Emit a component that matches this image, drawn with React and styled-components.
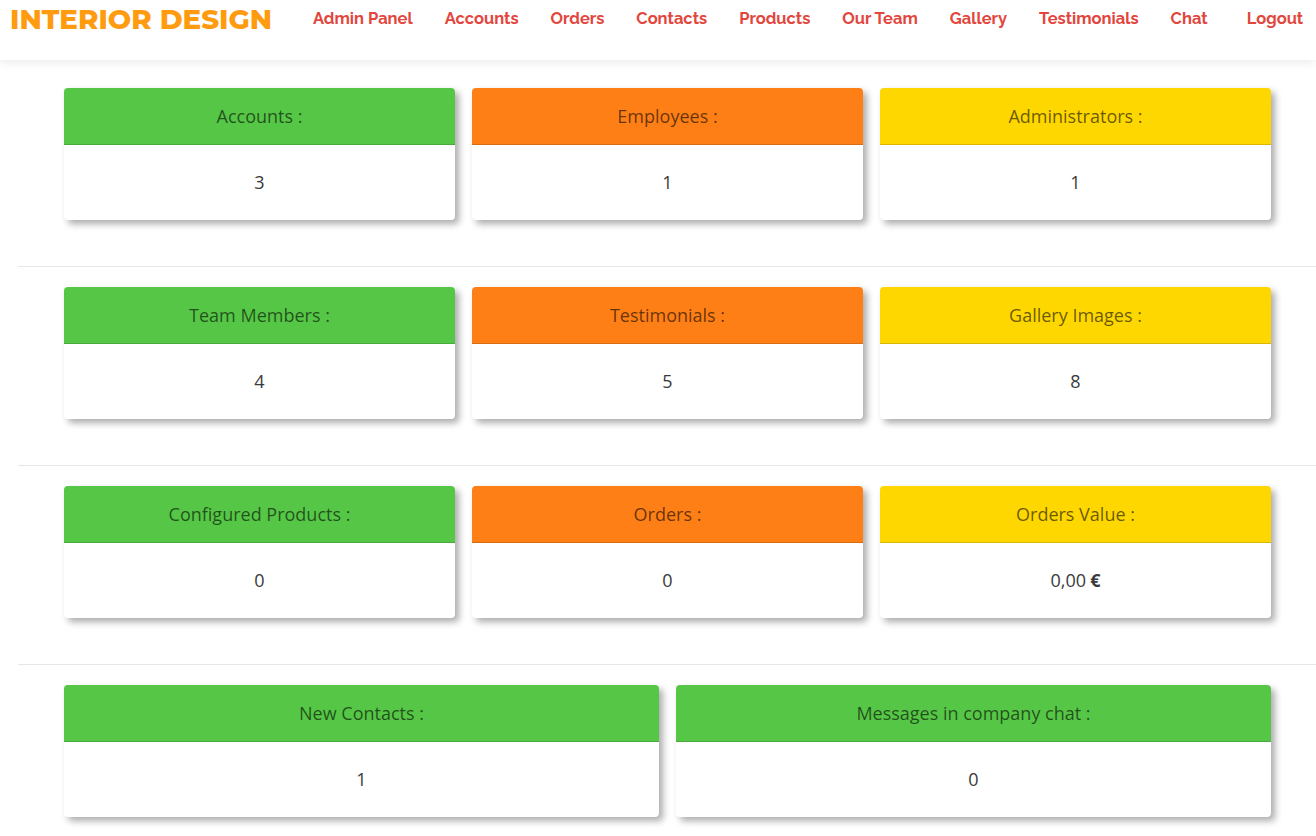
import React from 'react'
import styled, { createGlobalStyle } from 'styled-components';

const GlobalStyle = createGlobalStyle`
    body {
        margin: 0;
        background: #ffffff;
        font-family: "Open Sans", "Noto Sans", sans-serif;
        overflow: hidden;
    }
`;

const Header = styled.header`
    height: 60px;
    display: flex;
    align-items: flex-start;
    background: #fff;
    box-shadow: 0 2px 10px rgba(0, 0, 0, 0.09);
    position: relative;
    z-index: 2;
`;

const Logo = styled.div`
    font-family: "Montserrat", "Noto Sans", sans-serif;
    font-weight: 800;
    font-size: 27.7px;
    color: #ff9b0f;
    padding: 2px 0 0 10px;
    width: 303px;
    white-space: nowrap;
`;

const Nav = styled.nav`
    display: flex;
    gap: 32px;
    padding-top: 8px;
`;

const NavLink = styled.a`
    font-family: "Raleway", "Lato", sans-serif;
    font-weight: 700;
    font-size: 16.5px;
    color: #e2463d;
    text-decoration: none;
    white-space: nowrap;
    margin-left: ${p => p.$extra || 0}px;
`;

const Main = styled.main`
    padding: 28px 0 0 18px;
`;

const Section = styled.section`
    padding: 0 45px 46px 46px;
    width: 1207px;
`;

const Grid = styled.div`
    display: grid;
    grid-template-columns: repeat(${p => p.$cols}, 1fr);
    gap: 17px;
`;

const Divider = styled.hr`
    border: 0;
    border-top: 1px solid #e6e6e6;
    margin: 0 0 20px 0;
    width: 1320px;
`;

const Card = styled.div`
    border-radius: 4px;
    overflow: hidden;
    background: #fff;
    box-shadow: 4px 4px 7px rgba(0, 0, 0, 0.33);
`;

const CardHead = styled.div`
    box-sizing: border-box;
    background: ${p => p.$color};
    height: 57px;
    border-bottom: 1px solid rgba(0, 0, 0, 0.14);
    display: flex;
    align-items: center;
    justify-content: center;
    font-size: 18px;
    color: rgba(0, 0, 0, 0.6);
    padding-bottom: 1px;
`;

const CardBody = styled.div`
    box-sizing: border-box;
    height: 75px;
    display: flex;
    align-items: center;
    justify-content: center;
    font-size: 18px;
    color: #3a3a3a;
    padding-bottom: 2px;
`;

const Euro = styled.b`
    font-weight: 700;
    margin-left: 4px;
`;

const GREEN = '#56c646';
const ORANGE = '#fd7f16';
const YELLOW = '#fed700';

const rows = [
    [
        { title: 'Accounts :', value: '3', color: GREEN },
        { title: 'Employees :', value: '1', color: ORANGE },
        { title: 'Administrators :', value: '1', color: YELLOW },
    ],
    [
        { title: 'Team Members :', value: '4', color: GREEN },
        { title: 'Testimonials :', value: '5', color: ORANGE },
        { title: 'Gallery Images :', value: '8', color: YELLOW },
    ],
    [
        { title: 'Configured Products :', value: '0', color: GREEN },
        { title: 'Orders :', value: '0', color: ORANGE },
        { title: 'Orders Value :', value: '0,00', euro: true, color: YELLOW },
    ],
    [
        { title: 'New Contacts :', value: '1', color: GREEN },
        { title: 'Messages in company chat :', value: '0', color: GREEN },
    ],
];

const links = ['Admin Panel', 'Accounts', 'Orders', 'Contacts', 'Products', 'Our Team', 'Gallery', 'Testimonials', 'Chat', 'Logout'];

export default function App() {
    return (
        <>
            <GlobalStyle />
            <Header>
                <Logo>INTERIOR DESIGN</Logo>
                <Nav>
                    {links.map(l => (
                        <NavLink key={l} href="#" $extra={l === 'Logout' ? 7 : 0}>{l}</NavLink>
                    ))}
                </Nav>
            </Header>
            <Main>
                {rows.map((row, i) => (
                    <React.Fragment key={i}>
                        {i > 0 && <Divider />}
                        <Section>
                            <Grid $cols={row.length}>
                                {row.map(c => (
                                    <Card key={c.title}>
                                        <CardHead $color={c.color}>{c.title}</CardHead>
                                        <CardBody>
                                            {c.value}
                                            {c.euro && <Euro>€</Euro>}
                                        </CardBody>
                                    </Card>
                                ))}
                            </Grid>
                        </Section>
                    </React.Fragment>
                ))}
            </Main>
        </>
    )
}
